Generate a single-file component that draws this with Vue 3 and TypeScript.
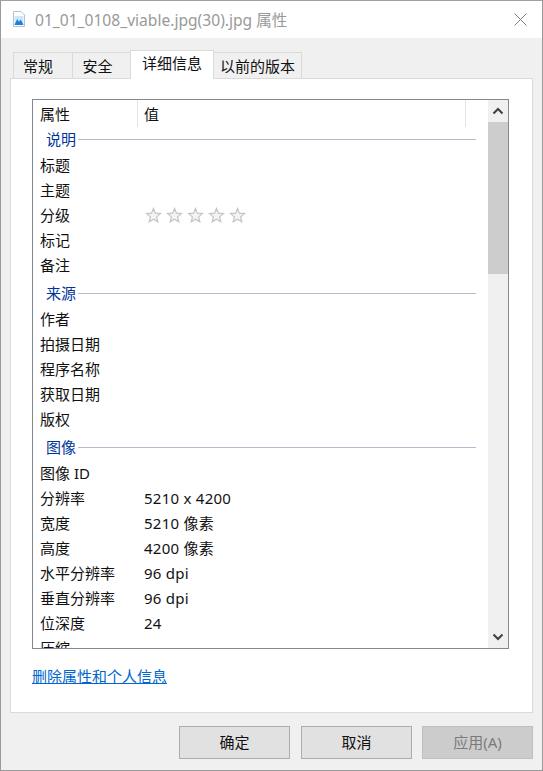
<script setup lang="ts">
interface Row { name: string; value?: string; stars?: boolean }
interface Group { title: string; rows: Row[] }
const tabs = ['常规', '安全', '详细信息', '以前的版本']
const groups: Group[] = [
  { title: '说明', rows: [{ name: '标题' }, { name: '主题' }, { name: '分级', stars: true }, { name: '标记' }, { name: '备注' }] },
  { title: '来源', rows: [{ name: '作者' }, { name: '拍摄日期' }, { name: '程序名称' }, { name: '获取日期' }, { name: '版权' }] },
  { title: '图像', rows: [
    { name: '图像 ID' },
    { name: '分辨率', value: '5210 x 4200' },
    { name: '宽度', value: '5210 像素' },
    { name: '高度', value: '4200 像素' },
    { name: '水平分辨率', value: '96 dpi' },
    { name: '垂直分辨率', value: '96 dpi' },
    { name: '位深度', value: '24' },
    { name: '压缩' },
  ] },
]
const stars = [1, 2, 3, 4, 5]
</script>

<template>
  <div class="window">
    <header class="titlebar">
      <svg class="file-icon" width="16" height="18" viewBox="0 0 16 18">
        <path d="M2.5 1.5H10L13.5 5V16.5H2.5Z" fill="#fff" stroke="#a9c4dd" />
        <rect x="3.5" y="6" width="9" height="9" fill="#cfe6f8" />
        <path d="M3.5 15L6.2 9L8 11.8L9.8 9.5L12.5 15Z" fill="#1f7fd4" />
      </svg>
      <span class="title">01_01_0108_viable.jpg(30).jpg 属性</span>
      <svg class="close" width="13" height="13" viewBox="0 0 13 13">
        <path d="M0.5 0.5L12.5 12.5M12.5 0.5L0.5 12.5" stroke="#808080" stroke-width="1" fill="none" />
      </svg>
    </header>

    <main class="body">
      <nav class="tabs">
        <div v-for="(t, i) in tabs" :key="t" class="tab" :class="{ active: i === 2 }">{{ t }}</div>
      </nav>

      <section class="panel">
        <div class="list">
          <div class="list-main">
            <div class="list-head">
              <div class="col col-name">属性</div>
              <div class="col col-value">值</div>
              <div class="col col-rest"></div>
            </div>
            <div class="list-scroll">
              <div v-for="g in groups" :key="g.title" class="group">
                <div class="group-title"><span>{{ g.title }}</span><i></i></div>
                <div v-for="r in g.rows" :key="r.name" class="row">
                  <div class="cell-name">{{ r.name }}</div>
                  <div v-if="r.stars" class="stars">
                    <svg v-for="s in stars" :key="s" width="17" height="16" viewBox="0 0 17 16">
                      <path d="M8.5 1.5L10.4 6.2L15.5 6.6L11.6 9.9L12.8 14.8L8.5 12.2L4.2 14.8L5.4 9.9L1.5 6.6L6.6 6.2Z" fill="#f3f3f3" stroke="#c4c4c4" stroke-width="1.2" />
                    </svg>
                  </div>
                  <div v-else class="cell-value">{{ r.value }}</div>
                </div>
              </div>
            </div>
          </div>
          <div class="scrollbar">
            <svg class="arrow" width="20" height="22" viewBox="0 0 20 22">
              <path d="M5.5 13.5L10 9L14.5 13.5" fill="none" stroke="#404040" stroke-width="2" />
            </svg>
            <div class="thumb"></div>
            <div class="track"></div>
            <svg class="arrow" width="20" height="22" viewBox="0 0 20 22">
              <path d="M5.5 8.5L10 13L14.5 8.5" fill="none" stroke="#404040" stroke-width="2" />
            </svg>
          </div>
        </div>
        <a class="link">删除属性和个人信息</a>
      </section>

      <footer class="buttons">
        <button class="btn">确定</button>
        <button class="btn">取消</button>
        <button class="btn disabled">应用(A)</button>
      </footer>
    </main>
  </div>
</template>

<style>
html, body { margin: 0; padding: 0; background: #f0f0f0; }
</style>

<style scoped>
.window {
  box-sizing: border-box;
  width: 543px;
  height: 771px;
  border: 1px solid #9a9a9a;
  border-top-color: #a0a0a0;
  display: flex;
  flex-direction: column;
  background: #f0f0f0;
  font-family: "Noto Sans", "Noto Sans CJK SC", sans-serif;
  font-size: 15px;
  color: #111;
  overflow: hidden;
}
.titlebar {
  box-sizing: border-box;
  height: 37px;
  flex: none;
  background: #fff;
  display: flex;
  align-items: center;
  padding: 0 15px 1px 10px;
}
.file-icon { flex: none; margin-right: 8px; }
.title { color: #999; font-size: 15.6px; flex: 1; white-space: nowrap; }
.close { flex: none; }
.body {
  flex: 1;
  display: flex;
  flex-direction: column;
  padding: 12px 9px 0;
  min-height: 0;
}
.tabs { display: flex; height: 28px; padding-left: 3px; align-items: flex-end; position: relative; z-index: 1; }
.tab {
  box-sizing: border-box;
  height: 26px;
  border: 1px solid #dadada;
  border-bottom: none;
  margin-right: -1px;
  background: #f0f0f0;
  display: flex;
  align-items: center;
  justify-content: center;
  width: 60px;
  line-height: 1;
  padding: 2px 10px 0 0;
}
.tab:nth-child(2) { width: 59px; padding-right: 8px; }
.tab:nth-child(4) { width: 89px; padding-right: 0; }
.tab.active {
  height: 29px;
  width: 84px;
  background: #fff;
  border-color: #dadada;
  margin-bottom: -1px;
  padding: 0 0 4px;
  position: relative;
}
.panel {
  box-sizing: border-box;
  height: 635px;
  flex: none;
  background: #fff;
  border: 1px solid #dadada;
  padding: 20px 23px 0 21px;
}
.list {
  box-sizing: border-box;
  height: 550px;
  border: 1px solid #828790;
  display: flex;
  overflow: hidden;
}
.list-main { flex: 1; min-width: 0; display: flex; flex-direction: column; }
.list-head { display: flex; height: 27px; flex: none; }
.col { box-sizing: border-box; padding-left: 7px; }
.col-name { width: 105px; border-right: 1px solid #e5e5e5; line-height: 29px; }
.col-value { width: 328px; border-right: 1px solid #e5e5e5; padding-left: 6px; line-height: 29px; }
.col-rest { flex: 1; }
.list-scroll { flex: 1; min-height: 0; overflow: hidden; }
.group { padding-right: 12px; }
.group + .group .group-title { height: 29px; padding-top: 3px; }
.group-title {
  box-sizing: border-box;
  height: 25px;
  display: flex;
  align-items: center;
  padding-left: 13px;
  color: #003399;
}
.group-title span { margin-right: 2px; line-height: 1; }
.group-title i { flex: 1; height: 1px; background: #b4bccb; display: block; }
.row { box-sizing: border-box; height: 25px; display: flex; align-items: center; }
.cell-name { width: 111px; padding-left: 7px; box-sizing: border-box; white-space: nowrap; flex: none; }
.cell-value { white-space: nowrap; letter-spacing: 0.25px; }
.stars { display: flex; gap: 4px; margin-left: 0.5px; }
.scrollbar {
  width: 20px;
  flex: none;
  background: #f0f0f0;
  display: flex;
  flex-direction: column;
}
.arrow { flex: none; display: block; }
.thumb { height: 152px; background: #cdcdcd; flex: none; }
.track { flex: 1; }
.link {
  display: block;
  margin-top: 17px;
  color: #0066cc;
  text-decoration: underline;
  line-height: 20px;
}
.buttons {
  display: flex;
  justify-content: flex-end;
  gap: 11px;
  padding-top: 13px;
}
.btn {
  box-sizing: border-box;
  width: 111px;
  height: 33px;
  background: #e1e1e1;
  border: 1px solid #adadad;
  font-family: inherit;
  font-size: 15px;
  color: #111;
  padding: 0 0 2px;
}
.btn.disabled { margin-left: -1px; background: #cccccc; border-color: #bfbfbf; color: #7a7a7a; }
</style>
